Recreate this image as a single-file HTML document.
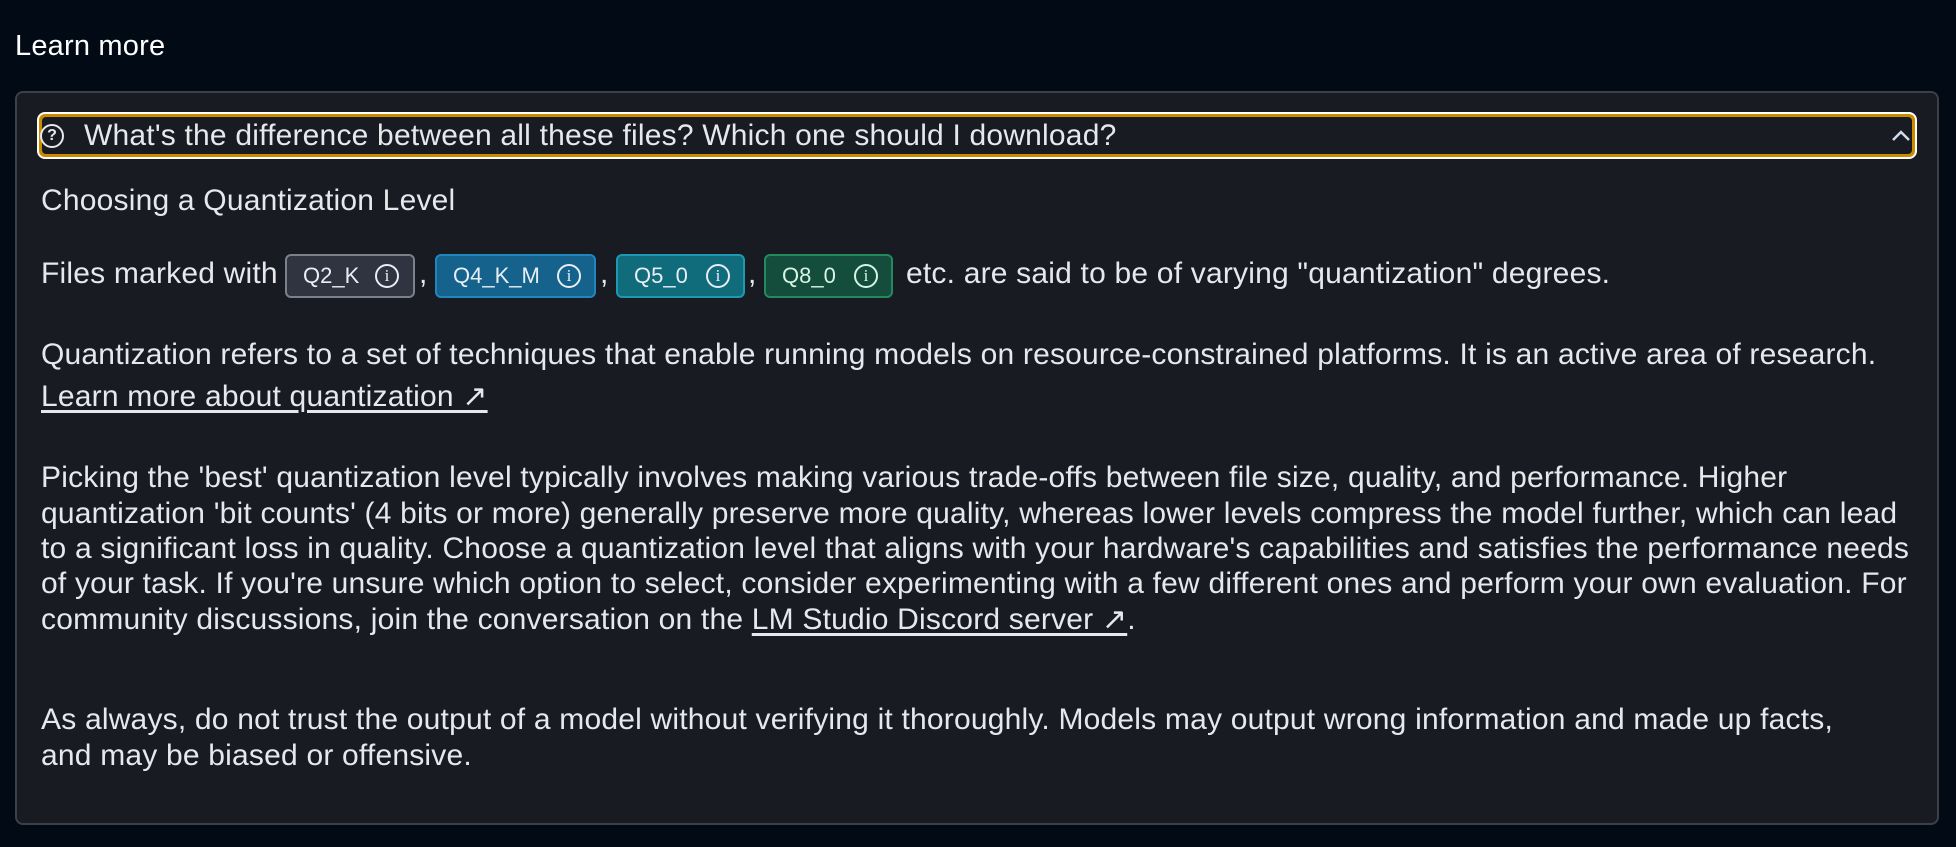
<!DOCTYPE html>
<html><head><meta charset="utf-8"><style>
*{margin:0;padding:0;box-sizing:border-box}
body{width:1956px;height:847px;background:#010a15;font-family:"Liberation Sans",sans-serif;color:#e6e8ec;position:relative;overflow:hidden}
.a{position:absolute;white-space:nowrap;font-size:30px;line-height:36px;letter-spacing:0.2px}
.panel{position:absolute;left:15px;top:91px;width:1924px;height:734px;background:#181b22;border:2px solid #3b4049;border-radius:8px}
.hdr{position:absolute;left:37px;top:112px;width:1880px;height:47px;border:2px solid #fff;border-radius:8px;background:#c98c00;padding:3px}
.hdr div{width:100%;height:100%;background:#181b22;border-radius:4px}
.b{position:absolute;top:254px;height:44px;border:2px solid;border-radius:6px;font-size:22px;line-height:40px;padding-left:16px;color:#e8eef5}
.i{position:absolute;top:8px;width:24px;height:24px;border:2px solid currentColor;border-radius:50%;font-size:17px;line-height:20px;text-align:center;font-family:"Liberation Serif",serif}
u{text-underline-offset:4px}
</style></head><body>
<div class="a" style="left:15px;top:28px;color:#fff;font-size:29px">Learn more</div>
<div class="panel"></div>
<div class="hdr"><div></div></div>
<div style="position:absolute;left:40px;top:124px;width:24px;height:24px;border:2px solid #e6e8ec;border-radius:50%;font-size:16px;line-height:20px;text-align:center;font-weight:bold">?</div>
<div class="a" style="left:84px;top:118px;font-size:30px">What's the difference between all these files? Which one should I download?</div>
<svg style="position:absolute;left:1890px;top:129px" width="22" height="14"><path d="M3 11 L11 3 L19 11" stroke="#cfdcec" stroke-width="2.5" fill="none"/></svg>
<div class="a" style="left:41px;top:183px">Choosing a Quantization Level</div>
<div class="a" style="left:41px;top:256px">Files marked with</div>
<div class="b" style="left:285px;width:130px;background:#2f3440;border-color:#7b808a">Q2_K<span class="i" style="left:88px">i</span></div>
<div class="a" style="left:419px;top:256px">,</div>
<div class="b" style="left:435px;width:161px;background:#15628c;border-color:#2186bd">Q4_K_M<span class="i" style="left:120px">i</span></div>
<div class="a" style="left:600px;top:256px">,</div>
<div class="b" style="left:616px;width:129px;background:#106b7b;border-color:#1b9ab0">Q5_0<span class="i" style="left:88px">i</span></div>
<div class="a" style="left:748px;top:256px">,</div>
<div class="b" style="left:764px;width:129px;background:#144d3c;border-color:#238a5e;color:#d6f5e4">Q8_0<span class="i" style="left:88px">i</span></div>
<div class="a" style="left:906px;top:256px">etc. are said to be of varying "quantization" degrees.</div>
<div class="a" style="left:41px;top:337px">Quantization refers to a set of techniques that enable running models on resource-constrained platforms. It is an active area of research.</div>
<div class="a" style="left:41px;top:379px"><u>Learn more about quantization ↗</u></div>
<div class="a" style="left:41px;top:460px">Picking the 'best' quantization level typically involves making various trade-offs between file size, quality, and performance. Higher</div>
<div class="a" style="left:41px;top:496px">quantization 'bit counts' (4 bits or more) generally preserve more quality, whereas lower levels compress the model further, which can lead</div>
<div class="a" style="left:41px;top:531px">to a significant loss in quality. Choose a quantization level that aligns with your hardware's capabilities and satisfies the performance needs</div>
<div class="a" style="left:41px;top:566px">of your task. If you're unsure which option to select, consider experimenting with a few different ones and perform your own evaluation. For</div>
<div class="a" style="left:41px;top:602px">community discussions, join the conversation on the <u>LM Studio Discord server ↗</u>.</div>
<div class="a" style="left:41px;top:702px">As always, do not trust the output of a model without verifying it thoroughly. Models may output wrong information and made up facts,</div>
<div class="a" style="left:41px;top:738px">and may be biased or offensive.</div>
</body></html>
